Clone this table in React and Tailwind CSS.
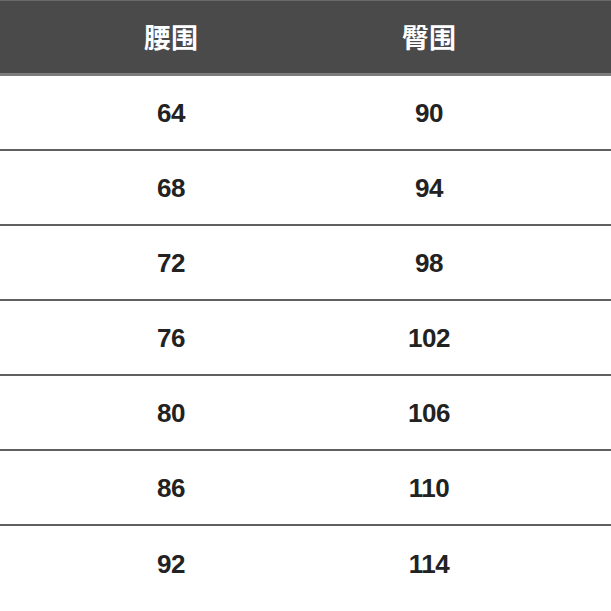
const rows = [
  ['64', '90'],
  ['68', '94'],
  ['72', '98'],
  ['76', '102'],
  ['80', '106'],
  ['86', '110'],
  ['92', '114'],
];

export default function App() {
  return (
    <div className="w-[611px] h-[611px] overflow-hidden bg-white" style={{ fontFamily: '"Liberation Sans", Arial, sans-serif' }}>
      {/* header */}
      <div className="h-[76px] bg-[#4a4a4a] border-t border-[#6a6a6a] border-b-[3px] border-b-[#7c7c7c] grid grid-cols-[42px_258px_258px_53px] items-center">
        <div />
        <div className="text-center text-white text-[27px] font-bold" style={{ fontFamily: '"Noto Sans CJK SC", "Noto Sans CJK JP", sans-serif' }}>
          腰围
        </div>
        <div className="text-center text-white text-[27px] font-bold" style={{ fontFamily: '"Noto Sans CJK SC", "Noto Sans CJK JP", sans-serif' }}>
          臀围
        </div>
        <div />
      </div>

      {rows.map(([waist, hip], i) => (
        <div
          key={waist}
          className={`h-[75px] pt-[2px] grid grid-cols-[42px_258px_258px_53px] items-center ${i < rows.length - 1 ? 'border-b-2 border-[#606060]' : ''}`}
        >
          <div />
          <div className="text-center text-[26px] font-bold text-[#222] tracking-[-0.5px]">{waist}</div>
          <div className="text-center text-[26px] font-bold text-[#222] tracking-[-0.5px]">{hip}</div>
          <div />
        </div>
      ))}
    </div>
  );
}
